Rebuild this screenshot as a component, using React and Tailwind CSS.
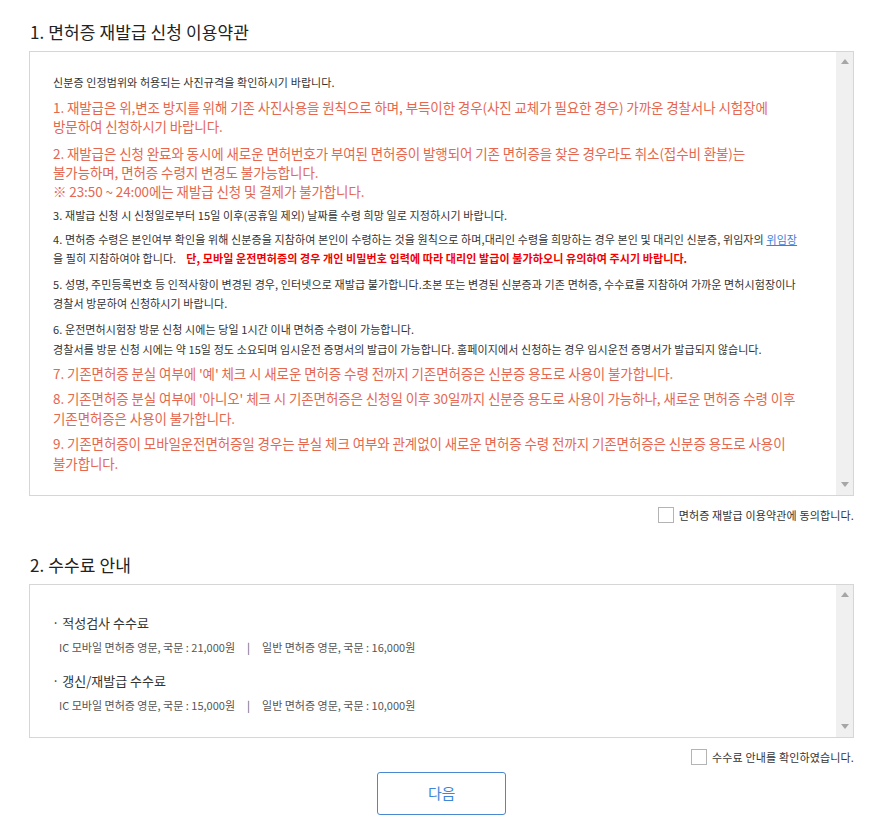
import React from "react";

function Scrollbar() {
  return (
    <div className="w-[17px] shrink-0 bg-[#f0f0f0] flex flex-col justify-between items-center pt-[7px] pb-[8px]">
      <svg width="8" height="5" viewBox="0 0 8 5">
        <path d="M0 5 L4 0 L8 5 Z" fill="#a6a6a6" />
      </svg>
      <svg width="8" height="5" viewBox="0 0 8 5">
        <path d="M0 0 L8 0 L4 5 Z" fill="#a6a6a6" />
      </svg>
    </div>
  );
}

function Check({ label }) {
  return (
    <div className="flex justify-end items-center h-[16px]">
      <span className="w-[16px] h-[16px] border border-[#b4b4b4] bg-white" />
      <span className="ml-[5px] text-[11px] leading-[16px] tracking-[0.15px] text-[#333]">
        {label}
      </span>
    </div>
  );
}

export default function App() {
  const black = "text-[11px] leading-[19px] tracking-[0.1px] text-[#333] whitespace-nowrap";
  const red = "text-[13.5px] leading-[19px] tracking-[-0.1px] text-[#e5674f] whitespace-nowrap";
  const red20 = "text-[13.5px] leading-[20px] tracking-[-0.1px] text-[#e5674f] whitespace-nowrap";

  return (
    <div className="w-[895px] min-h-[840px] bg-white font-['Noto_Sans_CJK_KR',sans-serif]">
      <div className="ml-[29px] w-[825px] pt-[21px] pb-[26px]">
        <h2 className="text-[17px] leading-[22px] tracking-[0.1px] text-[#222] font-normal pl-[1px]">
          1. 면허증 재발급 신청 이용약관
        </h2>

        <div className="mt-[8px] h-[445px] flex border border-[#d6d6d6]">
          <div className="flex-1 pl-[23px] pt-[21px] overflow-hidden">
            <p className={black}>신분증 인정범위와 허용되는 사진규격을 확인하시기 바랍니다.</p>
            <p className={`${red} mt-[6px]`}>
              1. 재발급은 위,변조 방지를 위해 기존 사진사용을 원칙으로 하며, 부득이한 경우(사진 교체가 필요한 경우) 가까운 경찰서나 시험장에
              <br />
              방문하여 신청하시기 바랍니다.
            </p>
            <p className={`${red} mt-[8px]`}>
              2. 재발급은 신청 완료와 동시에 새로운 면허번호가 부여된 면허증이 발행되어 기존 면허증을 찾은 경우라도 취소(접수비 환불)는
              <br />
              불가능하며, 면허증 수령지 변경도 불가능합니다.
              <br />※ 23:50 ~ 24:00에는 재발급 신청 및 결제가 불가합니다.
            </p>
            <p className={`${black} mt-[5px]`}>
              3. 재발급 신청 시 신청일로부터 15일 이후(공휴일 제외) 날짜를 수령 희망 일로 지정하시기 바랍니다.
            </p>
            <p className={`${black} mt-[5px]`}>
              4. 면허증 수령은 본인여부 확인을 위해 신분증을 지참하여 본인이 수령하는 것을 원칙으로 하며,대리인 수령을 희망하는 경우 본인 및 대리인 신분증, 위임자의{" "}
              <span className="text-[#3d7fd9] underline">위임장</span>
              <br />을 필히 지참하여야 합니다.
              <span className="ml-[10px] font-bold text-[#f00000]">
                단, 모바일 운전면허증의 경우 개인 비밀번호 입력에 따라 대리인 발급이 불가하오니 유의하여 주시기 바랍니다.
              </span>
            </p>
            <p className={`${black} mt-[7px]`}>
              5. 성명, 주민등록번호 등 인적사항이 변경된 경우, 인터넷으로 재발급 불가합니다.초본 또는 변경된 신분증과 기존 면허증, 수수료를 지참하여 가까운 면허시험장이나
              <br />
              경찰서 방문하여 신청하시기 바랍니다.
            </p>
            <p className={`${black} !leading-[20px] mt-[6px]`}>
              6. 운전면허시험장 방문 신청 시에는 당일 1시간 이내 면허증 수령이 가능합니다.
              <br />
              경찰서를 방문 신청 시에는 약 15일 정도 소요되며 임시운전 증명서의 발급이 가능합니다. 홈페이지에서 신청하는 경우 임시운전 증명서가 발급되지 않습니다.
            </p>
            <p className={`${red} mt-[5px]`}>
              7. 기존면허증 분실 여부에 '예' 체크 시 새로운 면허증 수령 전까지 기존면허증은 신분증 용도로 사용이 불가합니다.
            </p>
            <p className={`${red20} mt-[5px]`}>
              8. 기존면허증 분실 여부에 '아니오' 체크 시 기존면허증은 신청일 이후 30일까지 신분증 용도로 사용이 가능하나, 새로운 면허증 수령 이후
              <br />
              기존면허증은 사용이 불가합니다.
            </p>
            <p className={`${red20} mt-[5px]`}>
              9. 기존면허증이 모바일운전면허증일 경우는 분실 체크 여부와 관계없이 새로운 면허증 수령 전까지 기존면허증은 신분증 용도로 사용이
              <br />
              불가합니다.
            </p>
          </div>
          <Scrollbar />
        </div>

        <div className="mt-[11px]">
          <Check label="면허증 재발급 이용약관에 동의합니다." />
        </div>

        <h2 className="mt-[31px] text-[17px] leading-[22px] tracking-[0.1px] text-[#222] font-normal pl-[1px]">
          2. 수수료 안내
        </h2>

        <div className="mt-[8px] h-[154px] flex border border-[#d6d6d6]">
          <div className="flex-1 pl-[22px] pt-[28px] overflow-hidden">
            <p className="text-[13px] leading-[19px] text-[#333] whitespace-nowrap">
              · 적성검사 수수료
            </p>
            <p className="mt-[6px] pl-[7px] text-[11px] leading-[19px] text-[#555] whitespace-nowrap">
              IC 모바일 면허증 영문, 국문 : 21,000원
              <span className="mx-[12px]">|</span>
              일반 면허증 영문, 국문 : 16,000원
            </p>
            <p className="mt-[14px] text-[13px] leading-[19px] text-[#333] whitespace-nowrap">
              · 갱신/재발급 수수료
            </p>
            <p className="mt-[6px] pl-[7px] text-[11px] leading-[19px] text-[#555] whitespace-nowrap">
              IC 모바일 면허증 영문, 국문 : 15,000원
              <span className="mx-[12px]">|</span>
              일반 면허증 영문, 국문 : 10,000원
            </p>
          </div>
          <Scrollbar />
        </div>

        <div className="mt-[11px]">
          <Check label="수수료 안내를 확인하였습니다." />
        </div>

        <div className="mt-[7px] flex justify-center">
          <button className="w-[129px] h-[43px] border border-[#4a88d0] rounded-[3px] bg-white text-[15px] tracking-[-0.3px] text-[#3d86d8]">
            다음
          </button>
        </div>
      </div>
    </div>
  );
}
